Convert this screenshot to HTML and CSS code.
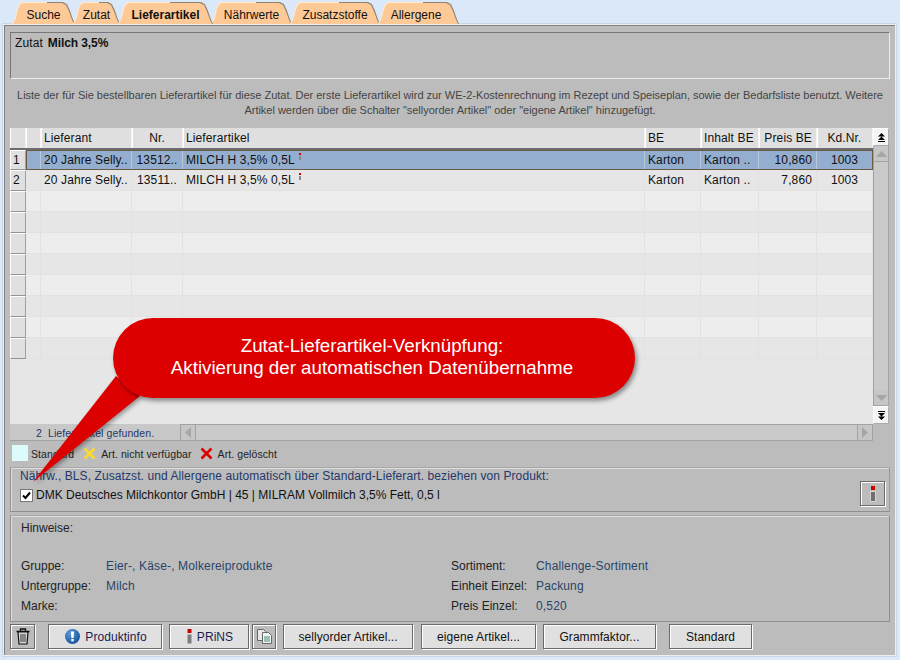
FILE: index.html
```html
<!DOCTYPE html>
<html lang="de">
<head>
<meta charset="utf-8">
<title>Lieferartikel</title>
<link rel="stylesheet" href="styles.css">
</head>
<body>
<div class="app">
  <nav class="tabs">
    <div class="tab tab-suche"><span>Suche</span></div>
    <div class="tab tab-zutat"><span>Zutat</span></div>
    <div class="tab tab-liefer active"><span>Lieferartikel</span></div>
    <div class="tab tab-naehr"><span>Nährwerte</span></div>
    <div class="tab tab-zusatz"><span>Zusatzstoffe</span></div>
    <div class="tab tab-allerg"><span>Allergene</span></div>
  </nav>
  <main class="panel">
    <section class="title-box"><span>Zutat</span><b>Milch 3,5%</b></section>
    <p class="desc">Liste der für Sie bestellbaren Lieferartikel für diese Zutat. Der erste Lieferartikel wird zur WE-2-Kostenrechnung im Rezept und Speiseplan, sowie der Bedarfsliste benutzt. Weitere<br>Artikel werden über die Schalter "sellyorder Artikel" oder "eigene Artikel" hinzugefügt.</p>
    <section class="table-wrap">
      <div class="table-col">
        <div class="row head">
          <div class="c num"></div><div class="c"></div><div class="c">Lieferant</div><div class="c ctr">Nr.</div><div class="c">Lieferartikel</div><div class="c">BE</div><div class="c">Inhalt BE</div><div class="c rgt">Preis BE</div><div class="c ctr">Kd.Nr.</div>
        </div>
        <div class="row sel">
          <div class="c num">1</div><div class="c"></div><div class="c">20 Jahre Selly..</div><div class="c ctr">13512..</div><div class="c">MILCH H 3,5% 0,5L<i class="mini-i"></i></div><div class="c">Karton</div><div class="c">Karton ..</div><div class="c rgt">10,860</div><div class="c ctr">1003</div>
        </div>
        <div class="row alt">
          <div class="c num">2</div><div class="c"></div><div class="c">20 Jahre Selly..</div><div class="c ctr">13511..</div><div class="c">MILCH H 3,5% 0,5L<i class="mini-i"></i></div><div class="c">Karton</div><div class="c">Karton ..</div><div class="c rgt">7,860</div><div class="c ctr">1003</div>
        </div>
        <div class="row"><div class="c num"></div><div class="c"></div><div class="c"></div><div class="c"></div><div class="c"></div><div class="c"></div><div class="c"></div><div class="c"></div><div class="c"></div></div>
        <div class="row alt"><div class="c num"></div><div class="c"></div><div class="c"></div><div class="c"></div><div class="c"></div><div class="c"></div><div class="c"></div><div class="c"></div><div class="c"></div></div>
        <div class="row"><div class="c num"></div><div class="c"></div><div class="c"></div><div class="c"></div><div class="c"></div><div class="c"></div><div class="c"></div><div class="c"></div><div class="c"></div></div>
        <div class="row alt"><div class="c num"></div><div class="c"></div><div class="c"></div><div class="c"></div><div class="c"></div><div class="c"></div><div class="c"></div><div class="c"></div><div class="c"></div></div>
        <div class="row"><div class="c num"></div><div class="c"></div><div class="c"></div><div class="c"></div><div class="c"></div><div class="c"></div><div class="c"></div><div class="c"></div><div class="c"></div></div>
        <div class="row alt"><div class="c num"></div><div class="c"></div><div class="c"></div><div class="c"></div><div class="c"></div><div class="c"></div><div class="c"></div><div class="c"></div><div class="c"></div></div>
        <div class="row"><div class="c num"></div><div class="c"></div><div class="c"></div><div class="c"></div><div class="c"></div><div class="c"></div><div class="c"></div><div class="c"></div><div class="c"></div></div>
        <div class="row alt"><div class="c num"></div><div class="c"></div><div class="c"></div><div class="c"></div><div class="c"></div><div class="c"></div><div class="c"></div><div class="c"></div><div class="c"></div></div>
        <div class="table-fill"></div>
      </div>
      <div class="vbar">
        <div class="jump"><svg width="7" height="9" viewBox="0 0 7 9"><path d="M3.500 0L7 3.500H0zM3.500 3.500L7 7H0zM0 8h7v1H0z" fill="#000"/></svg></div>
        <div class="step"><svg width="11" height="6" viewBox="0 0 11 6"><path d="M5.500 0L11 6H0z" fill="#a6a6a6"/></svg></div>
        <div class="track"></div>
        <div class="step"><svg width="11" height="6" viewBox="0 0 11 6"><path d="M0 0H11L5.500 6z" fill="#a6a6a6"/></svg></div>
        <div class="jump"><svg width="7" height="9" viewBox="0 0 7 9"><path d="M0 0h7v1H0zM0 2h7L3.500 5.500zM0 5.500h7L3.500 9z" fill="#000"/></svg></div>
      </div>
    </section>
    <div class="status-row">
      <div class="status">2&nbsp; Lieferartikel gefunden.</div>
      <div class="hstep"><svg width="6" height="11" viewBox="0 0 6 11"><path d="M6 0V11L0 5.500z" fill="#a6a6a6"/></svg></div>
      <div class="htrack"></div>
      <div class="hstep"><svg width="6" height="11" viewBox="0 0 6 11"><path d="M0 0V11L6 5.500z" fill="#a6a6a6"/></svg></div>
    </div>
    <div class="legend">
      <span class="swatch"></span><span class="leg-txt leg-first">Standard</span>
      <svg class="leg-x" width="13" height="13" viewBox="0 0 13 13"><path d="M1.500 1.500L11.500 11.500M11.500 1.500L1.500 11.500" stroke="#fdd92e" stroke-width="2.600"/></svg><span class="leg-txt">Art. nicht verfügbar</span>
      <svg class="leg-x" width="13" height="13" viewBox="0 0 13 13"><path d="M1.500 1.500L11.500 11.500M11.500 1.500L1.500 11.500" stroke="#dc0000" stroke-width="2.600"/></svg><span class="leg-txt">Art. gelöscht</span>
    </div>
    <section class="group">
      <div class="group-title">Nährw., BLS, Zusatzst. und Allergene automatisch über Standard-Lieferart. beziehen von Produkt:</div>
      <div class="group-line">
        <span class="check"><svg width="9" height="9" viewBox="0 0 9 9"><path d="M1 4.500L3.500 7L8 1.500" fill="none" stroke="#000" stroke-width="2"/></svg></span>
        <span class="group-prod">DMK Deutsches Milchkontor GmbH | 45 | MILRAM Vollmilch 3,5% Fett, 0,5 l</span>
      </div>
      <button class="btn flat info-btn"><svg width="6" height="16" viewBox="0 0 6 16"><rect width="4" height="4" x="1" fill="#c80000"/><rect width="6" height="11" y="5" fill="#d4d4d4"/><rect width="4" height="9" x="1" y="6" fill="#6f6f6f"/></svg></button>
    </section>
    <section class="notes">
      <div class="note-head">Hinweise:</div>
      <div class="note-grid">
        <span class="lbl">Gruppe:</span><span class="val">Eier-, Käse-, Molkereiprodukte</span>
        <span class="lbl">Sortiment:</span><span class="val">Challenge-Sortiment</span>
        <span class="lbl">Untergruppe:</span><span class="val">Milch</span>
        <span class="lbl">Einheit Einzel:</span><span class="val">Packung</span>
        <span class="lbl">Marke:</span><span class="val"></span>
        <span class="lbl">Preis Einzel:</span><span class="val">0,520</span>
      </div>
    </section>
    <footer class="actions">
      <button class="btn flat b-trash"><svg width="14" height="17" viewBox="0 0 14 17"><path d="M.5 3.500h13M4.500 3V1h5v2" fill="none" stroke="#111" stroke-width="1.300"/><path d="M2 4l1 12h8l1-12z" fill="#d8d8d8" stroke="#111" stroke-width="1.200"/><path d="M5 6v8M7 6v8M9 6v8" stroke="#333" stroke-width="1"/></svg></button>
      <button class="btn b-prod"><svg width="15" height="15" viewBox="0 0 15 15"><defs><radialGradient id="infoGrad" cx=".35" cy=".3" r=".8"><stop offset="0" stop-color="#5d9bdc"/><stop offset="1" stop-color="#0f4d96"/></radialGradient></defs><circle cx="7.500" cy="7.500" r="7.500" fill="url(#infoGrad)"/><path d="M5.900 2.500h3.200L8.600 9H6.400z" fill="#fff"/><rect x="6.300" y="10" width="2.400" height="2.400" fill="#fff"/></svg><span>Produktinfo</span></button>
      <button class="btn b-prins"><svg width="5" height="15" viewBox="0 0 5 15"><rect width="4" height="4" x=".5" fill="#c80000"/><rect width="4" height="9" x=".5" y="5.500" fill="#7d7d7d"/></svg><span>PRiNS</span></button>
      <button class="btn flat b-copy"><svg width="15" height="15" viewBox="0 0 15 15"><path d="M.5 .5h6l2 2v9h-8z" fill="#e8e8e8" stroke="#666"/><path d="M5.500 3.500h6l3 3v8h-9z" fill="#f6f6f6" stroke="#666"/><path d="M7 8h6M7 10h6M7 12h6" stroke="#3b8a7a"/></svg></button>
      <button class="btn b-selly">sellyorder Artikel...</button>
      <button class="btn b-eigene">eigene Artikel...</button>
      <button class="btn b-gramm">Grammfaktor...</button>
      <button class="btn b-std">Standard</button>
    </footer>
  </main>
</div>
<aside class="callout">
  <svg class="callout-tail" width="160" height="180" viewBox="0 0 160 180"><path d="M33 172L116 66L140 86z" fill="#dc0000"/></svg>
  <div class="bubble">Zutat-Lieferartikel-Verknüpfung:<br>Aktivierung der automatischen Datenübernahme</div>
</aside>
</body>
</html>
```
FILE: styles.css
```css
* { box-sizing: border-box; }
html, body { margin: 0; padding: 0; }
body {
  width: 900px; height: 660px; overflow: hidden; position: relative;
  background: #dbe8fa;
  font: 12px "Liberation Sans", Arial, sans-serif; color: #111;
}
.app { display: flex; flex-direction: column; height: 660px; padding: 2px 4px 4px 3px; }

/* tabs */
.tabs { display: flex; height: 22px; padding-left: 9px; flex: none; }
.tab {
  position: relative; height: 22px; margin-right: -2px;
  background: linear-gradient(to right, #ffe8cc 0 55%, #8f8370 55%);
  clip-path: polygon(0 100%, 3px 70%, 5px 30%, 7px 8%, 10px 0, calc(100% - 12px) 0, calc(100% - 8px) 10%, calc(100% - 5px) 40%, calc(100% - 2px) 80%, 100% 100%);
  display: flex; align-items: center; justify-content: center;
}
.tab::before {
  content: ""; position: absolute; inset: 1px 1px 0 1px; background: #fdc996;
  clip-path: polygon(0 100%, 3px 70%, 5px 30%, 7px 8%, 10px 0, calc(100% - 12px) 0, calc(100% - 8px) 10%, calc(100% - 5px) 40%, calc(100% - 2px) 80%, 100% 100%);
}
.tab span { position: relative; padding-top: 3px; }
.tab.active { font-weight: 700; z-index: 2; }
.tab-suche { width: 63px; }
.tab-zutat { width: 47px; }
.tab-liefer { width: 95px; }
.tab-naehr { width: 81px; }
.tab-zusatz { width: 90px; }
.tab-allerg { width: 81px; }
.tab-allerg span { margin-right: 5px; }

/* panel */
.panel {
  flex: 1; display: flex; flex-direction: column;
  background: #bcbcbc;
  border: 1px solid #eee;
  box-shadow: inset 1px 1px 0 #808080, 0 0 0 1px #c9d6e6;
  padding: 7px 5px 0 6px;
}
.title-box {
  height: 47px; flex: none; padding: 3px 4px;
  border: 1px solid #777; border-right-color: #eee; border-bottom-color: #eee;
  letter-spacing: .1px;
}
.title-box b { margin-left: 5px; letter-spacing: -.1px; }
.desc {
  margin: 0; padding-top: 9px; height: 49px; flex: none;
  font-size: 11px; line-height: 15px; text-align: center; color: #444; letter-spacing: -.015px; white-space: nowrap;
}
.table-wrap { display: flex; height: 296px; flex: none; }
.table-col { width: 863px; display: flex; flex-direction: column; background: #e6e6e6; }
.row {
  display: grid; flex: none;
  grid-template-columns: 16px 15px 91px 51px 462px 56px 58px 58px 56px;
  height: 21px; background: #ededed;
}
.row.alt { background: #e6e6e6; }
.c {
  border-right: 1px solid #e2e2e2; border-bottom: 1px solid #e2e2e2;
  padding: 0 3px; line-height: 21px; white-space: nowrap; overflow: hidden; letter-spacing: .12px;
}
.c.ctr { text-align: center; }
.c.rgt { text-align: right; }
.c.num { background: #e0e0e0; border-left: 1px solid #fff; border-top: 1px solid #fff; border-right: 1px solid #a0a0a0; border-bottom: 1px solid #949494; padding: 0 2px; line-height: 19px; }
.head { height: 22px; background: #dfdfdf; border-bottom: 2px solid #6d6d6d; }
.head .c { border: 0; border-right: 1px solid #f4f4f4; border-left: 1px solid #fff; padding: 0 3px 0 2px; line-height: 21px; background: #dfdfdf; }
.head .c.num { border-bottom: 0; border-right: 1px solid #f4f4f4; }
.row.sel { height: 20px; background: #93aecf; outline: 1px solid #6a5a44; outline-offset: -1px; margin-left: 16px; grid-template-columns: 15px 91px 51px 462px 56px 58px 58px 56px; position: relative; }
.row.sel .num { position: absolute; left: -16px; top: 0; width: 16px; height: 20px; }
.row.sel .c { line-height: 20px; }
.row.sel .c:not(.num) { border-color: #b8c9de; border-bottom: 0; }
.row.sel .c.num { line-height: 19px; }
.c.rgt:not(:empty) { padding-right: 4px; }
.table-fill { flex: 1; }
.mini-i { display: inline-block; width: 2px; height: 7px; margin: 3px 0 0 4px; vertical-align: top; background: linear-gradient(#d00000 0 2px, transparent 2px 3px, #8a8a8a 3px); }

.vbar { width: 17px; display: flex; flex-direction: column; }
.jump { height: 18px; width: 16px; background: #f4f4f4; border: 1px solid #fff; border-right-color: #aaa; border-bottom-color: #aaa; display: flex; align-items: center; justify-content: center; flex: none; }
.step { height: 16px; width: 16px; background: #c6c6c6; border: 1px solid #a3a3a3; border-top: 0; display: flex; align-items: center; justify-content: center; flex: none; }
.track { flex: 1; width: 16px; background: #cacaca; border-left: 1px solid #a3a3a3; border-right: 1px solid #a3a3a3; }

.status-row { display: flex; height: 17px; flex: none; width: 863px; }
.status { width: 170px; background: #c8c8c8; padding: 1px 0 0 26px; font-size: 10.500px; line-height: 16px; color: #24386a; letter-spacing: .1px; border-bottom: 1px solid #a3a3a3; white-space: nowrap; }
.hstep { width: 16px; background: #c6c6c6; border: 1px solid #a3a3a3; display: flex; align-items: center; justify-content: center; }
.htrack { flex: 1; background: #cacaca; border-top: 1px solid #a3a3a3; border-bottom: 1px solid #a3a3a3; }

.legend { display: flex; align-items: center; height: 26px; flex: none; padding: 0 0 2px 2px; }
.swatch { width: 16px; height: 16px; background: #dcfcfc; margin-right: 3px; }
.leg-txt { font-size: 10.500px; color: #222; letter-spacing: .08px; margin-left: 5px; padding-top: 1px; }
.leg-first { margin-left: 0; margin-right: 9px; }
.leg-x { margin-left: 8px; }
.leg-x:first-of-type { margin-left: 0; }

.group {
  position: relative; height: 45px; flex: none;
  border: 1px solid #8f8f8f; border-right-color: #999; border-top-color: #a8a8a8;
  box-shadow: inset 1px 1px 0 #ddd;
  padding: 0 9px;
}
.group-title { color: #24386a; line-height: 14px; letter-spacing: .09px; margin-top: 1px; white-space: nowrap; }
.group-line { display: flex; align-items: center; margin-top: 5px; }
.check { width: 13px; height: 13px; background: #fff; border: 1px solid #777; display: flex; align-items: center; justify-content: center; margin-right: 3px; }
.btn {
  font: inherit; color: #111; background: #e0e0e0; padding: 0;
  border: 1px solid #6a6a6a;
  box-shadow: 1px 1px 0 #fff, inset 1px 1px 0 #fff;
  display: inline-flex; align-items: center; justify-content: center; letter-spacing: .05px;
}
.btn.flat { background: #bcbcbc; }
.info-btn { position: absolute; right: 4px; top: 13px; width: 25px; height: 25px; }

.notes {
  height: 107px; flex: none; margin-top: 3px; padding: 5px 10px;
  border: 1px solid #8f8f8f; border-top-color: #a8a8a8;
  box-shadow: inset 1px 1px 0 #ddd;
}
.note-head { line-height: 14px; color: #222; }
.note-grid {
  display: grid; grid-template-columns: 85px 345px 85px 1fr; row-gap: 6px; margin-top: 24px;
  line-height: 14px;
}
.lbl { color: #222; }
.val { color: #2a4468; letter-spacing: .15px; }
.actions { display: flex; align-items: center; height: 29px; flex: none; }
.actions .btn { height: 25px; }
.b-trash { width: 25px; }
.b-prod { width: 114px; margin-left: 13px; padding-left: 2px; gap: 5px; color: #1c1c50; }
.b-prins { width: 80px; margin-left: 7px; padding-left: 2px; gap: 5px; color: #1c1c50; }
.b-copy { width: 24px; margin-left: 3px; }
.b-selly { width: 130px; margin-left: 7px; }
.b-eigene { width: 115px; margin-left: 8px; }
.b-gramm { width: 113px; margin-left: 7px; }
.b-std { width: 83px; margin-left: 13px; }

/* callout */
.callout { position: absolute; left: 0; top: 0; }
.callout-tail { position: absolute; left: 0; top: 310px; filter: drop-shadow(2px 2px 2px rgba(0,0,0,.35)); }
.bubble {
  position: absolute; left: 113px; top: 318px; width: 522px; height: 80px;
  background: #dc0000; border-radius: 40px; color: #fff;
  box-shadow: 2px 3px 4px rgba(0,0,0,.4);
  font-size: 18.750px; line-height: 22px; text-align: center; padding: 17px 4px 0 0; white-space: nowrap;
}
```
